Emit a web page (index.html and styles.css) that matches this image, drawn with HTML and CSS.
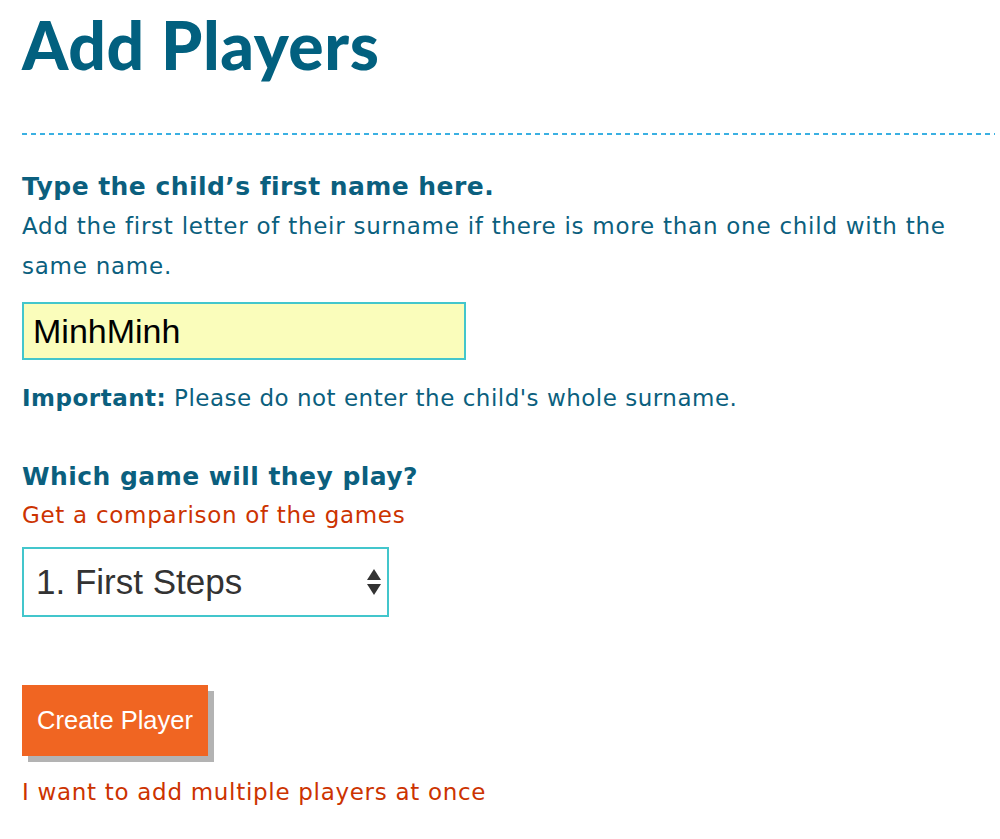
FILE: index.html
```html
<!DOCTYPE html>
<html>
<head>
<meta charset="utf-8">
<link rel="stylesheet" href="styles.css">
</head>
<body>
<main class="page">
  <h1 class="title">Add Players</h1>
  <div class="divider"></div>
  <form class="form">
    <h2 class="label">Type the child’s first name here.</h2>
    <p class="hint">Add the first letter of their surname if there is more than one child with the same name.</p>
    <input class="name-input" type="text" value="MinhMinh">
    <p class="note"><strong>Important:</strong> Please do not enter the child's whole surname.</p>
    <h2 class="label label-game">Which game will they play?</h2>
    <a class="link link-compare" href="#">Get a comparison of the games</a>
    <div class="select">
      <span class="select-text">1. First Steps</span>
      <svg class="select-arrows" width="16" height="32" viewBox="0 0 16 32"><path d="M8 3 L15 14 L1 14 Z" fill="#333"/><path d="M1 18 L15 18 L8 29 Z" fill="#333"/></svg>
    </div>
    <button class="btn" type="button">Create Player</button>
    <a class="link link-multi" href="#">I want to add multiple players at once</a>
  </form>
</main>
</body>
</html>
```
FILE: styles.css
```css
html, body { margin: 0; padding: 0; background: #fff; }
body { font-family: "DejaVu Sans", Verdana, sans-serif; color: #0b5f7e; }
.page { padding: 0 5px 0 22px; display: flex; flex-direction: column; }
.title {
  font-family: Lato, "Open Sans", sans-serif;
  font-weight: 900;
  font-size: 66px;
  line-height: 80px;
  color: #02607f;
  margin: 5px 0 0 0;
  letter-spacing: 0.6px;
}
.divider {
  height: 2px;
  margin-top: 48px;
  background: repeating-linear-gradient(90deg, #3ab0e2 0 5px, transparent 5px 9px);
}
.form { display: flex; flex-direction: column; align-items: flex-start; }
.label {
  font-size: 25px;
  font-weight: bold;
  margin: 37px 0 0 0;
  line-height: 30px;
  letter-spacing: 0.45px;
  color: #0b5f7e;
}
.hint {
  font-size: 23px;
  line-height: 40px;
  letter-spacing: 0.75px;
  margin: 4px 0 0 0;
  max-width: 960px;
}
.name-input {
  margin-top: 16px;
  width: 444px;
  height: 58px;
  box-sizing: border-box;
  border: 2px solid #43c6cc;
  background: #fafdbb;
  font-family: "Liberation Sans", Arial, sans-serif;
  font-size: 34px;
  color: #000;
  padding: 0 9px;
  outline: none;
}
.note { font-size: 23px; line-height: 40px; letter-spacing: 0.5px; margin: 18px 0 0 0; }
.note strong { font-weight: bold; }
.label-game { margin-top: 44px; }
.link { color: #cc3300; font-size: 23px; line-height: 38px; letter-spacing: 0.7px; text-decoration: none; }
.link-compare { margin-top: 4px; }
.select {
  margin-top: 13px;
  width: 367px;
  height: 70px;
  box-sizing: border-box;
  border: 2px solid #43c6cc;
  display: flex;
  align-items: center;
  justify-content: space-between;
  padding: 0 5px 0 12px;
}
.select-text { font-family: "Liberation Sans", Arial, sans-serif; font-size: 35px; color: #333; }
.btn {
  margin-top: 68px;
  width: 186px;
  height: 71px;
  border: none;
  background: #f06522;
  color: #fff;
  font-family: "Liberation Sans", Arial, sans-serif;
  font-size: 25.5px;
  box-shadow: 6px 6px 0 #b3b3b3;
  cursor: pointer;
  padding: 0;
}
.link-multi { margin-top: 17px; }
```
